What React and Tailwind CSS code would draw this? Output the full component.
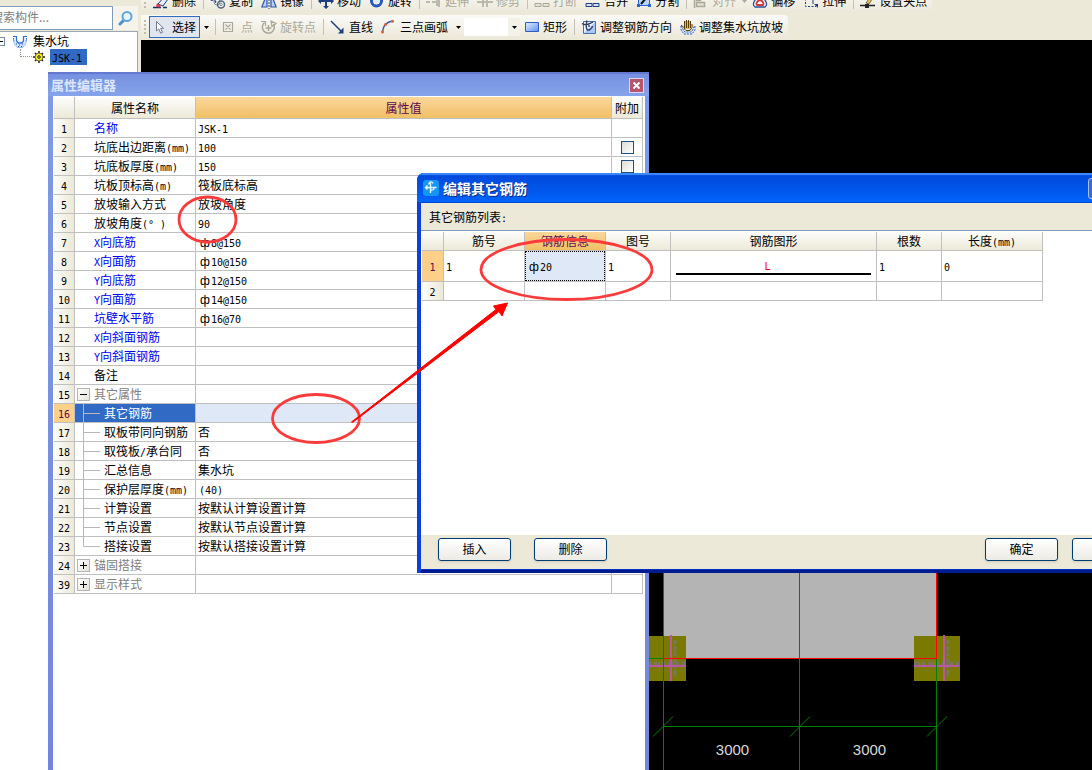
import React from "react";

/* Sets Latin runs in a half-width face so that they pair with the CJK text. */
function T({ children }) {
  const parts = String(children).split(/([\x20-\x7e°]+|ф)/).filter(Boolean);
  return parts.map((p, i) => {
    if (p === "ф")
      return (
        <span key={i} className="inline-block w-3 text-center font-['Liberation_Sans',sans-serif] text-[12px] leading-none">
          ф
        </span>
      );
    if (/^[\x20-\x7e°]+$/.test(p))
      return (
        <span key={i} className="font-['DejaVu_Sans_Mono',monospace] text-[10px] leading-none whitespace-pre">
          {p}
        </span>
      );
    return <span key={i}>{p}</span>;
  });
}

function Svg({ children }) {
  return (
    <svg width="16" height="16" viewBox="0 0 16 16" fill="none" className="shrink-0" aria-hidden="true">
      {children}
    </svg>
  );
}

const G = "#aaa899";
const N = "#1d3f7e";

const ICONS = {
  erase: (
    <Svg>
      <path d="M0 14.500h8M10 14.500h4" stroke="#16306b" strokeWidth="1.500" />
      <path d="M5 11l6-7 4 2-5 7z" fill="#e8eef8" stroke={N} />
      <path d="M4 10l4 3-2 1.500-3-1z" fill="#e23c4c" />
      <path d="M11 4l3-3 2 2-1 3z" fill="#16306b" />
    </Svg>
  ),
  copy: (
    <Svg>
      <path d="M0 6.500h4l2 3M2 3v5" stroke={N} strokeWidth="1.500" />
      <circle cx="7" cy="9" r="3" stroke="#7d8ea8" />
      <circle cx="11" cy="11.500" r="3.500" stroke="#55677f" strokeWidth="1.500" />
      <circle cx="11" cy="11.500" r="1.200" stroke="#7d8ea8" />
    </Svg>
  ),
  mirror: (
    <Svg>
      <path d="M6 1v13H.8zM10 1v13h5.200z" fill="#b8d2f8" stroke="#2a55a8" strokeWidth="1.200" />
      <path d="M8 0v16" stroke={N} strokeDasharray="2 1" />
    </Svg>
  ),
  move: (
    <Svg>
      <path d="M8 1v14M1 8h14" stroke={N} strokeWidth="2" />
      <path d="M8 0l3 3H5zM8 16l3-3H5zM0 8l3-3v6zM16 8l-3-3v6z" fill={N} />
    </Svg>
  ),
  rotate: (
    <Svg>
      <circle cx="7.500" cy="8" r="5" stroke="#2957c4" strokeWidth="3" />
      <circle cx="7.500" cy="8" r="2" fill="#dce8fb" />
      <path d="M8 0l4 3-4 3z" fill="#2957c4" />
    </Svg>
  ),
  extend: (
    <Svg>
      <path d="M0 9h4M6 9h4M13 2v12M11 5v8" stroke={G} strokeWidth="1.500" />
    </Svg>
  ),
  trim: (
    <Svg>
      <path d="M0 9h5M11 9h5M6 3v11M10 6v8M6 9h3" stroke={G} strokeWidth="1.500" />
    </Svg>
  ),
  breakIt: (
    <Svg>
      <path d="M1 10.500h6v3H1zM9 10.500h6v3H9z" fill="#e6e3d5" stroke={G} />
    </Svg>
  ),
  join: (
    <Svg>
      <path d="M1 10.500h6v3H1zM8 10.500h6v3H8z" fill="#d4e2f8" stroke={N} />
    </Svg>
  ),
  split: (
    <Svg>
      <path d="M2.500 3.500h11v9h-11z" fill="#b9d3fa" stroke="#2a62d8" />
      <path d="M1 11h3v3H1zM12 11h3v3h-3zM1 2h3v3H1zM12 2h3v3h-3z" fill="#2a62d8" />
      <path d="M5 11l6-7" stroke="#111" strokeWidth="2" />
    </Svg>
  ),
  align: (
    <Svg>
      <path d="M1.500 1v14" stroke={G} strokeWidth="1.500" />
      <path d="M3.500 3.500h4v4h-4zM3.500 9.500h8v4h-8z" fill="#e2dfd0" stroke={G} strokeWidth="1.500" />
    </Svg>
  ),
  offset: (
    <Svg>
      <path d="M3 14c-3-2-1-6 1-8 2-3 6-3 8 0 2 2 4 6 1 8z" fill="#f6f9ff" stroke="#2a4f96" strokeWidth="1.300" />
      <path d="M5 12c-1-1 0-3 1-4 1-1 3-1 4 0 1 1 2 3 1 4z" stroke="#d23a3a" strokeWidth="1.800" />
    </Svg>
  ),
  stretch: (
    <Svg>
      <path d="M2.500 2v11.500H13" stroke={N} strokeDasharray="2 1.500" />
      <path d="M4 3h6v8" stroke={N} />
      <path d="M11 11l4 4v-4z" fill={N} />
    </Svg>
  ),
  grip: (
    <Svg>
      <path d="M0 12.500h5M9 12.500h6" stroke="#222" strokeWidth="1.500" />
      <path d="M6 10l6-8 2 1-5 8z" fill="#e6c94a" stroke="#444" strokeWidth=".800" />
      <path d="M5 11h4v4H5z" fill="#222" />
    </Svg>
  ),
  pick: (
    <Svg>
      <path d="M3.500 2.500v9.500l2.200-2 2 4.200 1.800-.9-1.900-4h3z" fill="#fff" stroke="#6d7a92" />
    </Svg>
  ),
  point: (
    <Svg>
      <path d="M1.500 3.500h9v9h-9zM3.500 5.500l5 5M8.500 5.500l-5 5" stroke={G} strokeWidth="1.200" />
    </Svg>
  ),
  rotPoint: (
    <Svg>
      <path d="M3.500 3.500A6 6 0 1 0 12.500 5" stroke={G} strokeWidth="1.500" />
      <path d="M0 2.500h4.500V7M10 2l5 2.500-4 3z" stroke={G} strokeWidth="1.200" />
      <path d="M4.500 9h6M7.500 6v6" stroke={G} strokeWidth="1.500" />
    </Svg>
  ),
  line: (
    <Svg>
      <path d="M1 2l11 11" stroke={N} strokeWidth="1.500" />
      <path d="M13.500 8.500v6H8z" fill={N} />
    </Svg>
  ),
  arc: (
    <Svg>
      <path d="M1.500 13C2 7 5 3 11.500 2" stroke="#3a5ea8" strokeWidth="1.500" />
      <circle cx="1.500" cy="13" r="1.500" fill="#e0603c" />
      <circle cx="4.500" cy="5.500" r="1.500" fill="#e0603c" />
      <circle cx="11.500" cy="2.300" r="1.500" fill="#e0603c" />
    </Svg>
  ),
  rect: (
    <Svg>
      <defs>
        <linearGradient id="rectFill" x1="0" y1="0" x2="1" y2="1">
          <stop offset="0" stopColor="#e4efff" />
          <stop offset="1" stopColor="#5f8ff0" />
        </linearGradient>
      </defs>
      <path d="M1.500 3.500h13v9h-13z" fill="url(#rectFill)" stroke="#2e5cc0" />
    </Svg>
  ),
  steelDir: (
    <Svg>
      <path d="M2.500 2.500h12v12h-12z" fill="#a9c6f5" stroke="#4a6fb0" />
      <path d="M3 14V3h11z" fill="#eef4ff" />
      <path d="M1 4.500c3 2 7 1 11-1.500M6 1.500c-1 4-1 7 0 9 1 1.500 5 0 5.500-3.500M8 4v4" stroke="#2a3f63" strokeWidth="1.400" />
    </Svg>
  ),
  slope: (
    <Svg>
      <path d="M1 7c2 0 1 4 4 6h6c3-2 2-6 4-6v4l-3 4H4l-3-4z" fill="#dceaff" stroke="#2d5fc0" strokeDasharray="2 1" />
      <path d="M4.500 2v8h6V2z" fill="#e9b93a" />
      <path d="M4.500 2v8l1.500 1.500h4l2-3V5M6.500 1v8M8.500 1v8M10.500 2v7M1 6l3.500 3" stroke="#5a3d05" />
    </Svg>
  ),
};

const ROW1 = [
  ["erase", "删除"], "|", ["copy", "复制"], ["mirror", "镜像"], "|", ["move", "移动"], ["rotate", "旋转"], "|",
  ["extend", "延伸", 1], ["trim", "修剪", 1], "|", ["breakIt", "打断", 1], ["join", "合并"], ["split", "分割"], "|",
  ["align", "对齐", 1], "v", ["offset", "偏移"], ["stretch", "拉伸"], "|", ["grip", "设置夹点"],
];

function Tool({ icon, label, off, active }) {
  return (
    <button
      type="button"
      disabled={!!off}
      className={
        "flex h-[22px] shrink-0 items-center gap-[3px] px-1 whitespace-nowrap " +
        (active ? "bg-[#e1e6ee] outline outline-1 -outline-offset-1 outline-[#316ac5] " : "") +
        (off ? "text-[#aca899]" : "text-black")
      }
    >
      {ICONS[icon]}
      {label}
    </button>
  );
}

function Sep() {
  return (
    <span className="flex h-4 w-1.5 shrink-0 pl-[3px]">
      <span className="w-px bg-[#c5c2b2]" />
    </span>
  );
}

function Caret({ wide, off }) {
  return (
    <span className={"flex shrink-0 justify-center " + (wide ? "w-3" : "w-2")}>
      <svg width="5" height="3" viewBox="0 0 5 3" aria-hidden="true">
        <path d="M0 0h5L2.500 3z" fill={off ? G : "#000"} />
      </svg>
    </span>
  );
}

function Handle() {
  return (
    <span className="flex w-2 shrink-0 flex-col items-center gap-0.5">
      {[0, 1, 2, 3].map((i) => (
        <span key={i} className="h-0.5 w-0.5 bg-[#c1beae]" />
      ))}
    </span>
  );
}

const BAR =
  "flex h-6 shrink-0 items-center self-start rounded-r-sm bg-linear-to-b from-[#fbfaf7] to-[#ebe8d9] pr-px";

function Toolbars() {
  return (
    <div className="flex h-10 shrink-0 flex-col justify-end gap-0.5 overflow-hidden bg-[#ece9d8] pb-px">
      <div className={BAR}>
        <Handle />
        {ROW1.map((t, i) =>
          t === "|" ? <Sep key={i} /> : t === "v" ? <Caret key={i} off /> : <Tool key={i} icon={t[0]} label={t[1]} off={t[2]} />
        )}
      </div>
      <div className={BAR}>
        <Handle />
        <Tool icon="pick" label="选择" active />
        <Caret wide />
        <Sep />
        <Tool icon="point" label="点" off />
        <Tool icon="rotPoint" label="旋转点" off />
        <Sep />
        <Tool icon="line" label="直线" />
        <Tool icon="arc" label="三点画弧" />
        <Caret wide />
        <span className="relative flex h-[18px] w-14 shrink-0 items-center bg-white">
          <select aria-label="弧半径" className="h-full w-full appearance-none bg-transparent" />
          <span className="pointer-events-none absolute inset-y-0 right-0 flex w-3 items-center bg-[#f3f1e8]">
            <Caret wide />
          </span>
        </span>
        <Tool icon="rect" label="矩形" />
        <Sep />
        <Tool icon="steelDir" label="调整钢筋方向" />
        <Tool icon="slope" label="调整集水坑放坡" />
      </div>
    </div>
  );
}

function TreePanel() {
  return (
    <aside className="flex w-[141px] shrink-0 flex-col bg-[#ece9d8] pt-1.5 pr-[3px]">
      <div className="flex h-6 shrink-0 overflow-hidden">
        <input
          type="text"
          aria-label="搜索构件"
          placeholder="搜索构件..."
          className="-ml-3 h-6 w-[125px] border border-[#7f9db9] bg-white pb-1 pl-0.5 text-[12px] outline-none placeholder:text-[#808080]"
        />
        <button type="button" aria-label="搜索" className="flex flex-1 items-center justify-center bg-[#f5f3ea]">
          <svg width="16" height="16" viewBox="0 0 16 16" fill="none" aria-hidden="true">
            <path d="M6 10l-4 4" stroke="#4a90d0" strokeWidth="3" strokeLinecap="round" />
            <circle cx="9" cy="6.500" r="4.500" fill="#e9f5ff" stroke="#5fa8e0" strokeWidth="2" />
          </svg>
        </button>
      </div>
      <div className="mt-px flex-1 border-t border-r border-[#9aa7b5] bg-white pt-px leading-4">
        <div className="flex h-4 items-center">
          <button type="button" aria-label="折叠" className="-ml-1 flex h-[9px] w-[9px] items-center justify-center border border-[#7b8a9c] bg-white">
            <span className="h-px w-[5px] bg-black" />
          </button>
          <span className="ml-[7px] flex">
            <Svg>
              <path d="M1 3.500h3M12 3.500h3M1.500 5C2 10 3 12 5 14h6c2-2 3-4 3.500-9" stroke="#2f6fd8" />
              <path d="M2 8l3 1 1.500 1.500h3L11 9l3-1c0 3-1 4.500-3 6H5c-2-1.500-3-3-3-6z" fill="#cfe2fd" />
              <path d="M4.500 3v5l2 2h3l2-2V3" stroke="#2f6fd8" strokeWidth="1.300" />
              <path d="M4 11h1M7 12h1M10 11h1M6 13.500h1M9 13.500h1" stroke="#1d4fb0" />
            </Svg>
          </span>
          <span className="ml-[5px]">集水坑</span>
        </div>
        <div className="flex h-4 items-center">
          <span className="mb-2 ml-5 h-2 w-3 border-b border-l border-dotted border-[#9a988a]" />
          <svg width="12" height="12" viewBox="0 0 12 12" className="ml-px" aria-hidden="true">
            <path d="M6 0v12M0 6h12M2 2l8 8M10 2l-8 8" stroke="#222" strokeWidth="1.500" />
            <circle cx="6" cy="6" r="4" fill="#f7ee1c" stroke="#333" strokeWidth=".700" />
            <circle cx="6" cy="6" r="1.300" fill="#f7ee1c" stroke="#222" />
          </svg>
          <span className="ml-[5px] bg-[#316ac5] px-0.5 pr-[5px]">
            <T>JSK-1</T>
          </span>
        </div>
      </div>
    </aside>
  );
}

function ColumnMarks({ x1, x2, cx }) {
  return (
    <g>
      <path d={`M${x1} 663.500H${x2}`} stroke="#77775a" strokeWidth="4" strokeDasharray="3 1 2 1 4 3" />
      <path d={`M${cx + 4} 640V677`} stroke="#77775a" strokeWidth="3" strokeDasharray="4 2 5 1" />
      <path d={`M${x1} 666H${x2}M${cx} 635V681`} stroke="#b757a5" strokeWidth="2" />
    </g>
  );
}

function Drawing() {
  return (
    <svg className="h-full w-full" fill="none" aria-hidden="true">
      <g transform="translate(-141 -40)">
        <rect x="663" y="500" width="274" height="159" fill="#b4b4b4" />
        <rect x="640" y="636" width="46" height="45" fill="#7a7a00" />
        <rect x="914" y="636" width="46" height="45" fill="#7a7a00" />
        <ColumnMarks x1={640} x2={686} cx={671} />
        <ColumnMarks x1={914} x2={959} cx={944} />
        <path d="M663.500 659V770M799.500 659V770M936.500 659V770M663 726.500H937M640 658.500H663" stroke="#008000" />
        <path d="M653 736.500l20-20M790 736.500l20-20M927 736.500l20-20" stroke="#008000" />
        <path d="M663.500 500V658.500H936.500V500M799.500 500V658" stroke="#f00" />
        <text x="732.500" y="755" textAnchor="middle" fill="#d8d8d8" fontSize="15" fontFamily="Liberation Sans, sans-serif">
          3000
        </text>
        <text x="869.500" y="755" textAnchor="middle" fill="#d8d8d8" fontSize="15" fontFamily="Liberation Sans, sans-serif">
          3000
        </text>
      </g>
    </svg>
  );
}

/* number, name, value, kind */
const PROPS = [
  ["1", "名称", "JSK-1", "key"],
  ["2", "坑底出边距离(mm)", "100", "check"],
  ["3", "坑底板厚度(mm)", "150", "check"],
  ["4", "坑板顶标高(m)", "筏板底标高", "check"],
  ["5", "放坡输入方式", "放坡角度", "check"],
  ["6", "放坡角度(° )", "90", "check"],
  ["7", "X向底筋", "ф8@150", "key"],
  ["8", "X向面筋", "ф10@150", "key"],
  ["9", "Y向底筋", "ф12@150", "key"],
  ["10", "Y向面筋", "ф14@150", "key"],
  ["11", "坑壁水平筋", "ф16@70", "key"],
  ["12", "X向斜面钢筋", "", "key"],
  ["13", "Y向斜面钢筋", "", "key"],
  ["14", "备注", "", "plain"],
  ["15", "其它属性", "", "open"],
  ["16", "其它钢筋", "", "sub"],
  ["17", "取板带同向钢筋", "否", "sub"],
  ["18", "取筏板/承台同", "否", "sub"],
  ["19", "汇总信息", "集水坑", "sub"],
  ["20", "保护层厚度(mm)", "(40)", "sub"],
  ["21", "计算设置", "按默认计算设置计算", "sub"],
  ["22", "节点设置", "按默认节点设置计算", "sub"],
  ["23", "搭接设置", "按默认搭接设置计算", "last"],
  ["24", "锚固搭接", "", "closed"],
  ["39", "显示样式", "", "closed"],
];

const HEAD = "border-r border-b border-[#c0c0c0] bg-linear-to-b from-[#fdfdfb] to-[#ece9d8] p-0 font-normal";
const HEAD_ON = "border-r border-b border-[#c0c0c0] bg-linear-to-b from-[#fbd79a] to-[#f0c064] p-0 font-normal text-[#5a0a50]";
const NUM = "border-r border-b border-[#c0c0c0] bg-linear-to-r from-[#fdfdfb] to-[#ece9d8] p-0 text-center font-normal";
const NUM_ON = "border-r border-b border-[#c0c0c0] bg-[#fdd08a] p-0 text-center font-normal text-[#5a0a50]";
const CELL = "border-r border-b border-[#c0c0c0] p-0";

function NameCell({ name, kind, selected }) {
  if (kind === "open" || kind === "closed")
    return (
      <div className="flex h-[18px] items-center pl-0.5 text-[#808080]">
        <button
          type="button"
          aria-label={kind === "open" ? "折叠" : "展开"}
          className="flex h-[13px] w-[13px] items-center justify-center border border-[#b4b4b4] bg-linear-to-br from-white to-[#e4e2d8]"
        >
          <svg width="7" height="7" viewBox="0 0 7 7" aria-hidden="true">
            <path d={kind === "open" ? "M0 3.500h7" : "M0 3.500h7M3.500 0v7"} stroke="#000" />
          </svg>
        </button>
        <span className="ml-1">{name}</span>
      </div>
    );
  if (kind === "sub" || kind === "last")
    return (
      <div className={"flex h-[18px] items-center " + (selected ? "bg-[#316ac5] text-white" : "")}>
        <svg width="29" height="18" viewBox="0 0 29 18" aria-hidden="true" className="shrink-0 overflow-visible">
          <path d={kind === "last" ? "M8.500-1V9.500H25" : "M8.500-1V19M8.500 9.500H25"} stroke="#b8b8b8" fill="none" />
        </svg>
        <span><T>{name}</T></span>
      </div>
    );
  return (
    <div className={"flex h-[18px] items-center pl-[19px] " + (kind === "key" ? "text-[#0000f0]" : "")}>
      <span><T>{name}</T></span>
    </div>
  );
}

function PropertyWindow() {
  return (
    <section
      aria-label="属性编辑器"
      className="absolute top-[72px] bottom-0 left-12 flex w-[601px] flex-col bg-linear-to-b from-[#7f9be6] to-[#7386dc]"
    >
      <header className="flex h-6 shrink-0 items-center justify-between border-t-2 border-[#6478d0] bg-linear-to-b from-[#7590e0] to-[#86a4ea] pr-1.5 pl-[3px]">
        <h2 className="text-[13px] font-bold text-[#dbe6fa]">属性编辑器</h2>
        <button type="button" aria-label="关闭" className="flex h-[13px] w-[13px] items-center justify-center bg-[#b5566c] outline outline-1 outline-[#d8d8f0]">
          <svg width="7" height="7" viewBox="0 0 7 7" aria-hidden="true">
            <path d="M.500.500l6 6M6.500.500l-6 6" stroke="#fff" strokeWidth="2" />
          </svg>
        </button>
      </header>
      <div className="mr-1 ml-[5px] flex-1 overflow-hidden bg-white pt-px pr-0.5 pl-px">
        <table className="w-full table-fixed border-separate border-spacing-0 leading-[18px]">
          <colgroup>
            <col className="w-[21px]" />
            <col className="w-[121px]" />
            <col />
            <col className="w-[31px]" />
          </colgroup>
          <thead>
            <tr className="h-[22px]">
              <th className={HEAD} aria-label="序号" />
              <th className={HEAD}>属性名称</th>
              <th className={HEAD_ON}>属性值</th>
              <th className={HEAD}>附加</th>
            </tr>
          </thead>
          <tbody>
            {PROPS.map(([n, name, value, kind]) => {
              const on = n === "16";
              return (
                <tr key={n} className="h-[19px] whitespace-nowrap">
                  <th scope="row" className={on ? NUM_ON : NUM}>
                    <div className="h-[18px]"><T>{n}</T></div>
                  </th>
                  <td className={CELL}>
                    <NameCell name={name} kind={kind} selected={on} />
                  </td>
                  <td className={CELL}>
                    <div className={"h-[18px] " + (/^[ф(]/.test(value) ? "pl-[3px] " : "pl-0.5 ") + (on ? "bg-[#dfe8f6]" : "")}>
                      <T>{value}</T>
                    </div>
                  </td>
                  <td className={CELL}>
                    {kind === "check" && (
                      <div className="flex h-[18px] items-center justify-center">
                        <input
                          type="checkbox"
                          aria-label={name}
                          className="h-[13px] w-[13px] appearance-none border border-[#1c5180] bg-linear-to-br from-[#dcdcd7] to-white"
                        />
                      </div>
                    )}
                  </td>
                </tr>
              );
            })}
          </tbody>
        </table>
      </div>
    </section>
  );
}

const BTN =
  "flex h-[23px] w-[73px] items-center justify-center rounded-[3px] border border-[#003c74] bg-linear-to-b from-white to-[#ecebe5] pb-0.5 shadow-sm";

function RebarDialog() {
  return (
    <section
      role="dialog"
      aria-label="编辑其它钢筋"
      className="absolute top-[173px] left-[417px] flex h-[400px] w-[743px] flex-col overflow-hidden rounded-t-[7px] bg-[#0a40dc]"
    >
      <header className="flex h-[30px] shrink-0 items-center bg-linear-to-b from-[#0048d8] via-[#0054e8] to-[#0066ff] pr-[5px] pl-1.5 shadow-[inset_0_2px_1px_#3c8cff,inset_0_-1px_0_#0046d0]">
        <svg width="16" height="16" viewBox="0 0 16 16" fill="none" aria-hidden="true">
          <rect width="16" height="16" rx="3" fill="#1496f4" />
          <path d="M6 4.500a2 2 0 0 1 4-1M7.500 3v7M2.500 7.500h11M4.500 5.500l-2 2 2 2M11 8c0 2-1 2-3.500 2.200V13" stroke="#e8f6ff" strokeWidth="1.400" />
        </svg>
        <h2 className="ml-1 flex-1 text-[14px] leading-[30px] font-bold text-white [text-shadow:1px_1px_0_#0a2a80]">编辑其它钢筋</h2>
        <div className="flex gap-0.5">
          {["最小化", "最大化", "关闭"].map((l) => (
            <button key={l} type="button" aria-label={l} className="h-[21px] w-[21px] rounded-[3px] border border-[#a8c0f0] bg-[#3a68dc]" />
          ))}
        </div>
      </header>
      <div className="mx-1 mb-1 flex flex-1 flex-col bg-[#ece9d8] shadow-[0_1px_0_#0030c0,0_4px_0_#001a90]">
        <p className="h-[27px] shrink-0 pl-2 leading-[27px]"><T>其它钢筋列表:</T></p>
        <div className="flex-1 border-t border-[#7f9db9] bg-white pt-px pl-px">
          <table className="table-fixed border-separate border-spacing-0 leading-4">
            <colgroup>
              <col className="w-[22px]" />
              <col className="w-[81px]" />
              <col className="w-[81px]" />
              <col className="w-[65px]" />
              <col className="w-[206px]" />
              <col className="w-[65px]" />
              <col className="w-[101px]" />
            </colgroup>
            <thead>
              <tr className="h-[19px]">
                <th className={HEAD} aria-label="序号" />
                <th className={HEAD}>筋号</th>
                <th className={HEAD_ON}>钢筋信息</th>
                <th className={HEAD}>图号</th>
                <th className={HEAD}>钢筋图形</th>
                <th className={HEAD}>根数</th>
                <th className={HEAD}><T>长度(mm)</T></th>
              </tr>
            </thead>
            <tbody>
              <tr className="h-[31px]">
                <th scope="row" className={NUM_ON}><T>1</T></th>
                <td className={CELL + " pl-0.5"}><T>1</T></td>
                <td className={CELL + " bg-[#dfe8f6]"}>
                  <div className="flex h-[30px] items-center border border-dotted border-black pl-0.5">
                    <span><T>ф20</T></span>
                  </div>
                </td>
                <td className={CELL + " pl-0.5"}><T>1</T></td>
                <td className={CELL}>
                  <div className="px-[5px] text-center text-[#f00]">
                    <div className="pr-3"><T>L</T></div>
                    <div className="h-0.5 bg-black" />
                  </div>
                </td>
                <td className={CELL + " pl-0.5"}><T>1</T></td>
                <td className={CELL + " pl-0.5"}><T>0</T></td>
              </tr>
              <tr className="h-[19px]">
                <th scope="row" className={NUM}><T>2</T></th>
                <td className={CELL} />
                <td className={CELL} />
                <td className={CELL} />
                <td className={CELL} />
                <td className={CELL} />
                <td className={CELL} />
              </tr>
            </tbody>
          </table>
        </div>
        <footer className="flex h-[34px] shrink-0 items-start pt-[3px] pr-[11px] pl-[17px]">
          <button type="button" className={BTN}>插入</button>
          <button type="button" className={BTN + " ml-[23px]"}>删除</button>
          <button type="button" className={BTN + " ml-auto"}>确定</button>
          <button type="button" className={BTN + " ml-[14px]"}>取消</button>
        </footer>
      </div>
    </section>
  );
}

function Annotations() {
  return (
    <svg className="pointer-events-none absolute inset-0 h-full w-full" fill="none" aria-hidden="true">
      <g stroke="#fb3b3b" strokeWidth="2.800">
        <ellipse cx="207.500" cy="219.500" rx="28.500" ry="22.500" />
        <ellipse cx="316" cy="418.500" rx="43.500" ry="24" />
        <ellipse cx="566.500" cy="269.500" rx="85.500" ry="30" />
      </g>
      <path d="M351.500 422L496 309.500l-2.500-3.500 14-3-5.500 13-3-4.500L352.500 422.500z" fill="#f00" stroke="#f00" strokeWidth="1" />
    </svg>
  );
}

export default function App() {
  return (
    <div className="relative flex h-screen w-full overflow-hidden bg-black font-['Noto_Sans_CJK_SC',sans-serif] text-[12px] leading-4 text-black">
      <TreePanel />
      <main className="flex min-w-0 flex-1 flex-col">
        <Toolbars />
        <div className="min-h-0 flex-1 bg-black">
          <Drawing />
        </div>
      </main>
      <PropertyWindow />
      <RebarDialog />
      <Annotations />
    </div>
  );
}
